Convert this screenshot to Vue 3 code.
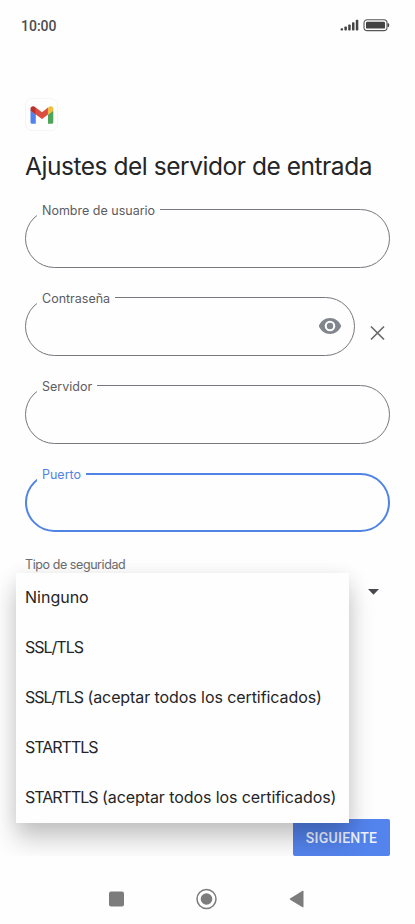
<script setup>
const fields = [
  { key: 'user', label: 'Nombre de usuario' },
  { key: 'password', label: 'Contraseña', secret: true },
  { key: 'server', label: 'Servidor' },
  { key: 'port', label: 'Puerto', active: true },
]
const options = [
  { name: 'Ninguno', plain: true },
  { name: 'SSL/TLS' },
  { name: 'SSL/TLS', note: ' (aceptar todos los certificados)' },
  { name: 'STARTTLS' },
  { name: 'STARTTLS', note: ' (aceptar todos los certificados)' },
]
</script>

<template>
  <div class="phone">
    <header class="status">
      <span class="clock">10:00</span>
      <svg class="indicators" width="50" height="14" viewBox="0 0 50 14">
        <g fill="#444">
          <rect x="0.6" y="9.2" width="2.5" height="2.4" rx="0.8" />
          <rect x="4.4" y="7.4" width="2.5" height="4.2" rx="0.8" />
          <rect x="8.2" y="5.4" width="2.5" height="6.2" rx="0.8" />
          <rect x="12" y="3.2" width="2.5" height="8.4" rx="0.8" />
          <rect x="15.8" y="0.8" width="2.5" height="10.8" rx="0.8" />
          <rect x="26" y="2.8" width="19" height="6.8" rx="1.2" />
          <path d="M47.5 4.300h.6q1 0 1 1v1.800q0 1-1 1h-.6z" />
        </g>
        <rect x="24" y="0.8" width="23" height="10.8" rx="3.2" fill="none" stroke="#555" stroke-width="1.1" />
      </svg>
    </header>

    <main class="content">
      <div class="logo">
        <svg width="24" height="18" viewBox="0 0 24 18">
          <path d="M.5 4.500 5.800 8.500v9.300H2.100A1.600 1.600 0 0 1 .5 16.200z" fill="#5083ed" />
          <path d="M18 8.500l5.300-4v11.700a1.600 1.600 0 0 1-1.600 1.600H18z" fill="#4fa459" />
          <path d="M5.800 1.600 12 6.300 18 1.600v7l-6 4.500-6.200-4.500z" fill="#dc4e41" />
          <path d="M.5 4.800V2.700C.5.600 2.500-.3 4.200.6L5.900 1.700v7z" fill="#b8322f" />
          <path d="M23.300 4.800V2.700c0-2.100-2-3-3.700-2.100L17.900 1.700v7z" fill="#efbd43" />
        </svg>
      </div>
      <h1 class="title">Ajustes del servidor de entrada</h1>

      <div class="form">
        <div v-for="f in fields" :key="f.key" class="row">
          <div class="field" :class="{ active: f.active }">
            <span class="label">{{ f.label }}</span>
            <svg v-if="f.secret" class="eye" width="24" height="18" viewBox="0 0 24 18">
              <path fill="#80868b" fill-rule="evenodd" d="M12 1C7 1 2.700 4.200.8 9 2.700 13.800 7 17 12 17s9.300-3.200 11.200-8C21.300 4.200 17 1 12 1zm0 13.300A5.300 5.300 0 1 1 12 3.700a5.300 5.300 0 0 1 0 10.600zM12 5.800a3.200 3.200 0 1 0 0 6.400 3.200 3.200 0 0 0 0-6.400z" />
            </svg>
          </div>
          <svg v-if="f.secret" class="clear" width="16" height="16" viewBox="0 0 16 16">
            <path d="M1 1.500l13 13M14 1.500l-13 13" stroke="#6b6b6b" stroke-width="1.700" />
          </svg>
        </div>
      </div>

      <div class="security">
        <span class="caption">Tipo de seguridad</span>
        <svg class="caret" width="11" height="6" viewBox="0 0 11 6"><path d="M0 0h11L5.500 5.800z" fill="#49494d" /></svg>
        <ul class="menu">
          <li v-for="(o, i) in options" :key="i"><span :class="{ caps: !o.plain }">{{ o.name }}</span><span v-if="o.note" class="note">{{ o.note }}</span></li>
        </ul>
      </div>

      <button class="next">SIGUIENTE</button>
    </main>

    <nav class="nav">
      <svg width="22" height="22" viewBox="0 0 22 22"><rect x="4" y="3.500" width="15" height="15" rx="2" fill="#7c7c7c" /></svg>
      <svg width="22" height="22" viewBox="0 0 22 22">
        <circle cx="10.500" cy="11" r="9.500" fill="none" stroke="#7c7c7c" stroke-width="1.500" />
        <circle cx="10.500" cy="11" r="5.800" fill="#7c7c7c" />
      </svg>
      <svg width="22" height="22" viewBox="0 0 22 22"><path d="M17.500 3.300v15.400q0 1-.9.500L4.500 12q-1.300-.9 0-1.800l12.100-7.400q.9-.5.900.5z" fill="#7c7c7c" /></svg>
    </nav>
  </div>
</template>

<style>
body {
  background: #fefefe;
}
</style>

<style scoped>
* {
  box-sizing: border-box;
}
.phone {
  width: 415px;
  height: 924px;
  display: flex;
  flex-direction: column;
  background: #fefefe;
  font-family: Inter, Roboto, sans-serif;
  color: #242527;
  overflow: hidden;
}
.status {
  height: 50px;
  padding: 1px 25px 0 21px;
  display: flex;
  align-items: center;
  justify-content: space-between;
}
.clock {
  font: 500 14px/20px Roboto, sans-serif;
  color: #4c4c4c;
  letter-spacing: 0;
}
.content {
  height: 806px;
  padding: 48px 25px 0;
  display: flex;
  flex-direction: column;
  overflow: hidden;
}
.logo {
  width: 33px;
  height: 33px;
  border: 1px solid #f5f5f5;
  border-radius: 7px;
  display: flex;
  align-items: center;
  justify-content: center;
  flex: none;
}
.title {
  margin: 19px 0 27px;
  font-size: 24.500px;
  line-height: 32px;
  font-weight: 400;
  white-space: nowrap;
  letter-spacing: -0.46px;
}
.form {
  display: flex;
  flex-direction: column;
  gap: 29px;
}
.row {
  display: flex;
  align-items: center;
}
.field {
  flex: 1;
  height: 59px;
  border: 1px solid #77777d;
  border-radius: 30px;
  position: relative;
  display: flex;
  align-items: center;
  justify-content: flex-end;
  padding-right: 12px;
}
.field.active {
  border: 2px solid #5083e3;
}
.label {
  position: absolute;
  top: -8px;
  left: 11px;
  padding: 0 5px;
  background: #fefefe;
  font-size: 12.500px;
  line-height: 18px;
  color: #5b5c61;
  white-space: nowrap;
}
.active .label {
  color: #5083e3;
  top: -9px;
  left: 10px;
}
.eye {
  margin-bottom: 1px;
}
.clear {
  margin: 13px 4px 0 15px;
}
.security {
  position: relative;
  display: flex;
  justify-content: space-between;
  margin-top: 24px;
  height: 40px;
}
.caption {
  font-size: 12.500px;
  line-height: 17px;
  color: #6b6c70;
  letter-spacing: -0.42px;
}
.caret {
  margin: 33px 11px 0 0;
}
.menu {
  position: absolute;
  z-index: 2;
  top: 17px;
  left: -9px;
  width: 333px;
  margin: 0;
  padding: 0;
  list-style: none;
  background: #fefefe;
  box-shadow: 0 16px 24px rgba(0, 0, 0, 0.21), 0 2px 18px rgba(0, 0, 0, 0.07);
}
.menu li {
  height: 50px;
  padding-left: 9px;
  font-size: 16px;
  line-height: 49px;
  white-space: pre;
}
.caps {
  letter-spacing: -1px;
}
.note {
  letter-spacing: -0.08px;
}
.next {
  align-self: flex-end;
  margin-top: 224px;
  width: 97px;
  height: 37px;
  flex: none;
  border: 0;
  padding: 1px 0 0;
  border-radius: 2px;
  background: #5383ec;
  color: #eef3ff;
  font: 500 14px/36px Roboto, sans-serif;
  letter-spacing: 0.25px;
}
.nav {
  height: 68px;
  padding: 18px 107px 0 105px;
  display: flex;
  align-items: center;
  justify-content: space-between;
}
</style>
